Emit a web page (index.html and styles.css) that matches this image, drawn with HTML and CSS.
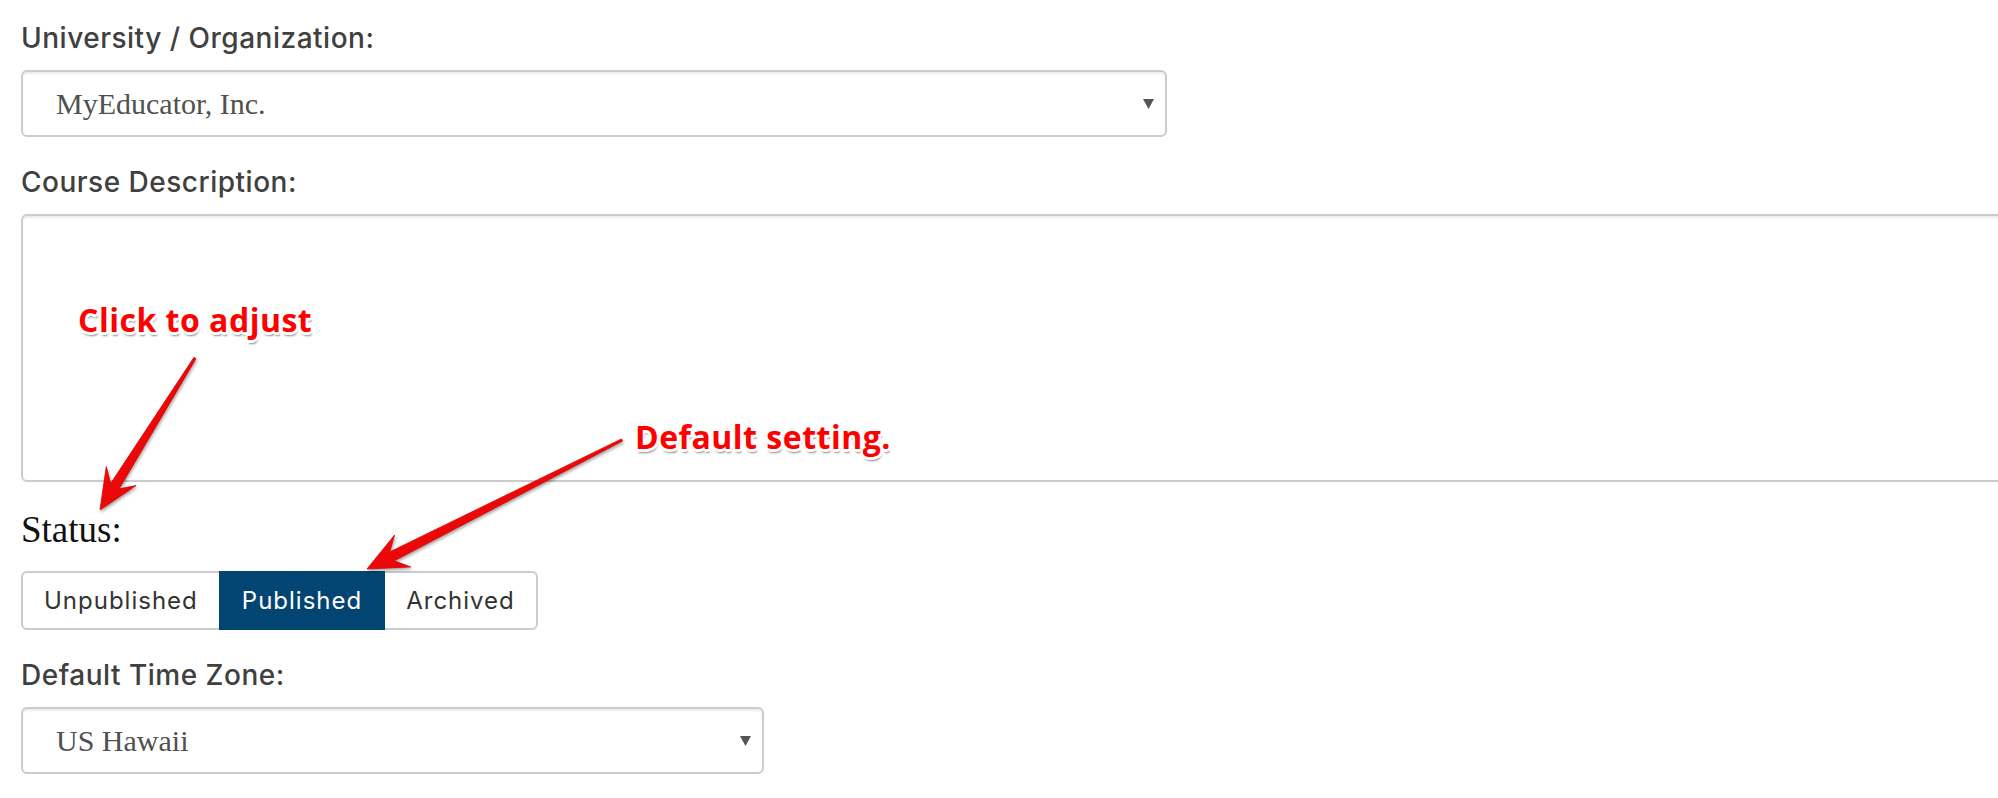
FILE: index.html
```html
<!DOCTYPE html>
<html lang="en">
<head>
<meta charset="utf-8">
<title>Course settings</title>
<link rel="stylesheet" href="styles.css">
</head>
<body>
<main class="form">
  <div class="field">
    <label class="lbl">University / Organization:</label>
    <div class="select select-wide">
      <span class="val">MyEducator, Inc.</span>
      <svg class="caret" width="11" height="10" viewBox="0 0 11 10"><polygon points="0,0 11,0 5.5,10" fill="#555"/></svg>
    </div>
  </div>
  <div class="field">
    <label class="lbl">Course Description:</label>
    <div class="textarea"></div>
  </div>
  <div class="field">
    <div class="status-lbl">Status:</div>
    <div class="btn-group">
      <button class="btn">Unpublished</button>
      <button class="btn active">Published</button>
      <button class="btn">Archived</button>
    </div>
  </div>
  <div class="field">
    <label class="lbl">Default Time Zone:</label>
    <div class="select select-narrow">
      <span class="val">US Hawaii</span>
      <svg class="caret" width="11" height="10" viewBox="0 0 11 10"><polygon points="0,0 11,0 5.5,10" fill="#555"/></svg>
    </div>
  </div>
</main>

<div class="note note-click">Click to adjust</div>
<div class="note note-default">Default setting.</div>

<svg class="arrows" width="1998" height="798" viewBox="0 0 1998 798">
  <defs>
    <linearGradient id="red" x1="0" y1="0" x2="1" y2="1">
      <stop offset="0" stop-color="#ff1010"/>
      <stop offset="1" stop-color="#d80000"/>
    </linearGradient>
  </defs>
  <polygon class="arrow" points="193.98,357.36 110.62,483.57 106.30,466.53 100,510 136.14,485.55 119.10,488.87 196.02,358.64"/>
  <polygon class="arrow" points="621.46,438.93 389.71,551.91 394.60,534.98 367,569 410.74,566.92 394.23,560.83 622.54,441.07"/>
</svg>
</body>
</html>
```

FILE: styles.css
```css
html, body {
  margin: 0;
  padding: 0;
}

body {
  position: relative;
  width: 1998px;
  height: 798px;
  overflow: hidden;
  background: #fff;
}

.form {
  display: flex;
  flex-direction: column;
  padding: 21px 0 0 21px;
}

.field + .field {
  margin-top: 28px;
}

.field {
  display: flex;
  flex-direction: column;
  align-items: flex-start;
}

.lbl {
  display: block;
  font-family: Inter, "Open Sans", sans-serif;
  font-size: 28px;
  font-weight: 500;
  line-height: 34px;
  letter-spacing: 0.5px;
  color: #404040;
  margin: 0 0 15px 0;
}

.select {
  box-sizing: border-box;
  height: 67px;
  border: 2px solid #ccc;
  border-radius: 6px;
  box-shadow: inset 0 2px 2px rgba(0, 0, 0, 0.075);
  background: #fff;
  display: flex;
  align-items: center;
  justify-content: space-between;
  padding: 0 11px 0 33px;
}

.select-wide {
  width: 1146px;
}

.select-narrow {
  width: 743px;
}

.val {
  font-family: "Liberation Serif", "Times New Roman", serif;
  font-size: 30px;
  color: #505050;
}

.caret {
  display: block;
}

.textarea {
  box-sizing: border-box;
  width: 2100px;
  height: 268px;
  border: 2px solid #ccc;
  border-radius: 6px;
  box-shadow: inset 0 2px 2px rgba(0, 0, 0, 0.075);
  background: #fff;
}

.status-lbl {
  font-family: "Liberation Serif", "Times New Roman", serif;
  font-size: 37px;
  line-height: 40px;
  color: #111;
  margin-bottom: 21px;
}

.btn-group {
  display: flex;
}

.btn {
  box-sizing: border-box;
  height: 59px;
  margin: 0;
  padding: 0 21px;
  border: 2px solid #ccc;
  background: #fff;
  color: #333;
  font-family: Inter, "Open Sans", sans-serif;
  font-size: 24px;
  letter-spacing: 1px;
  border-radius: 0;
}

.btn + .btn {
  margin-left: -2px;
}

.btn:first-child {
  border-radius: 6px 0 0 6px;
}

.btn:last-child {
  border-radius: 0 6px 6px 0;
}

.btn.active {
  position: relative;
  z-index: 1;
  background: #024572;
  border-color: #024572;
  color: #fff;
}

.note {
  position: absolute;
  z-index: 3;
  font-family: "Open Sans", "Noto Sans", sans-serif;
  font-weight: 700;
  font-size: 32px;
  line-height: 32px;
  letter-spacing: 0.5px;
  color: #ff0000;
  white-space: nowrap;
  text-shadow:
    -2px -2px 0 #fff, 0 -2.5px 0 #fff, 2px -2px 0 #fff, 2.5px 0 0 #fff,
    2px 2px 0 #fff, 0 2.5px 0 #fff, -2px 2px 0 #fff, -2.5px 0 0 #fff,
    1px 3.5px 2px rgba(0, 0, 0, 0.45);
}

.note-click {
  left: 78px;
  top: 304px;
}

.note-default {
  left: 635px;
  top: 421px;
}

.arrows {
  position: absolute;
  left: 0;
  top: 0;
  z-index: 2;
  pointer-events: none;
  overflow: visible;
}

.arrow {
  fill: url(#red);
  stroke: #e00000;
  stroke-width: 0.8;
  stroke-linejoin: round;
  filter: drop-shadow(1px 2px 1.5px rgba(0, 0, 0, 0.35));
}
```
